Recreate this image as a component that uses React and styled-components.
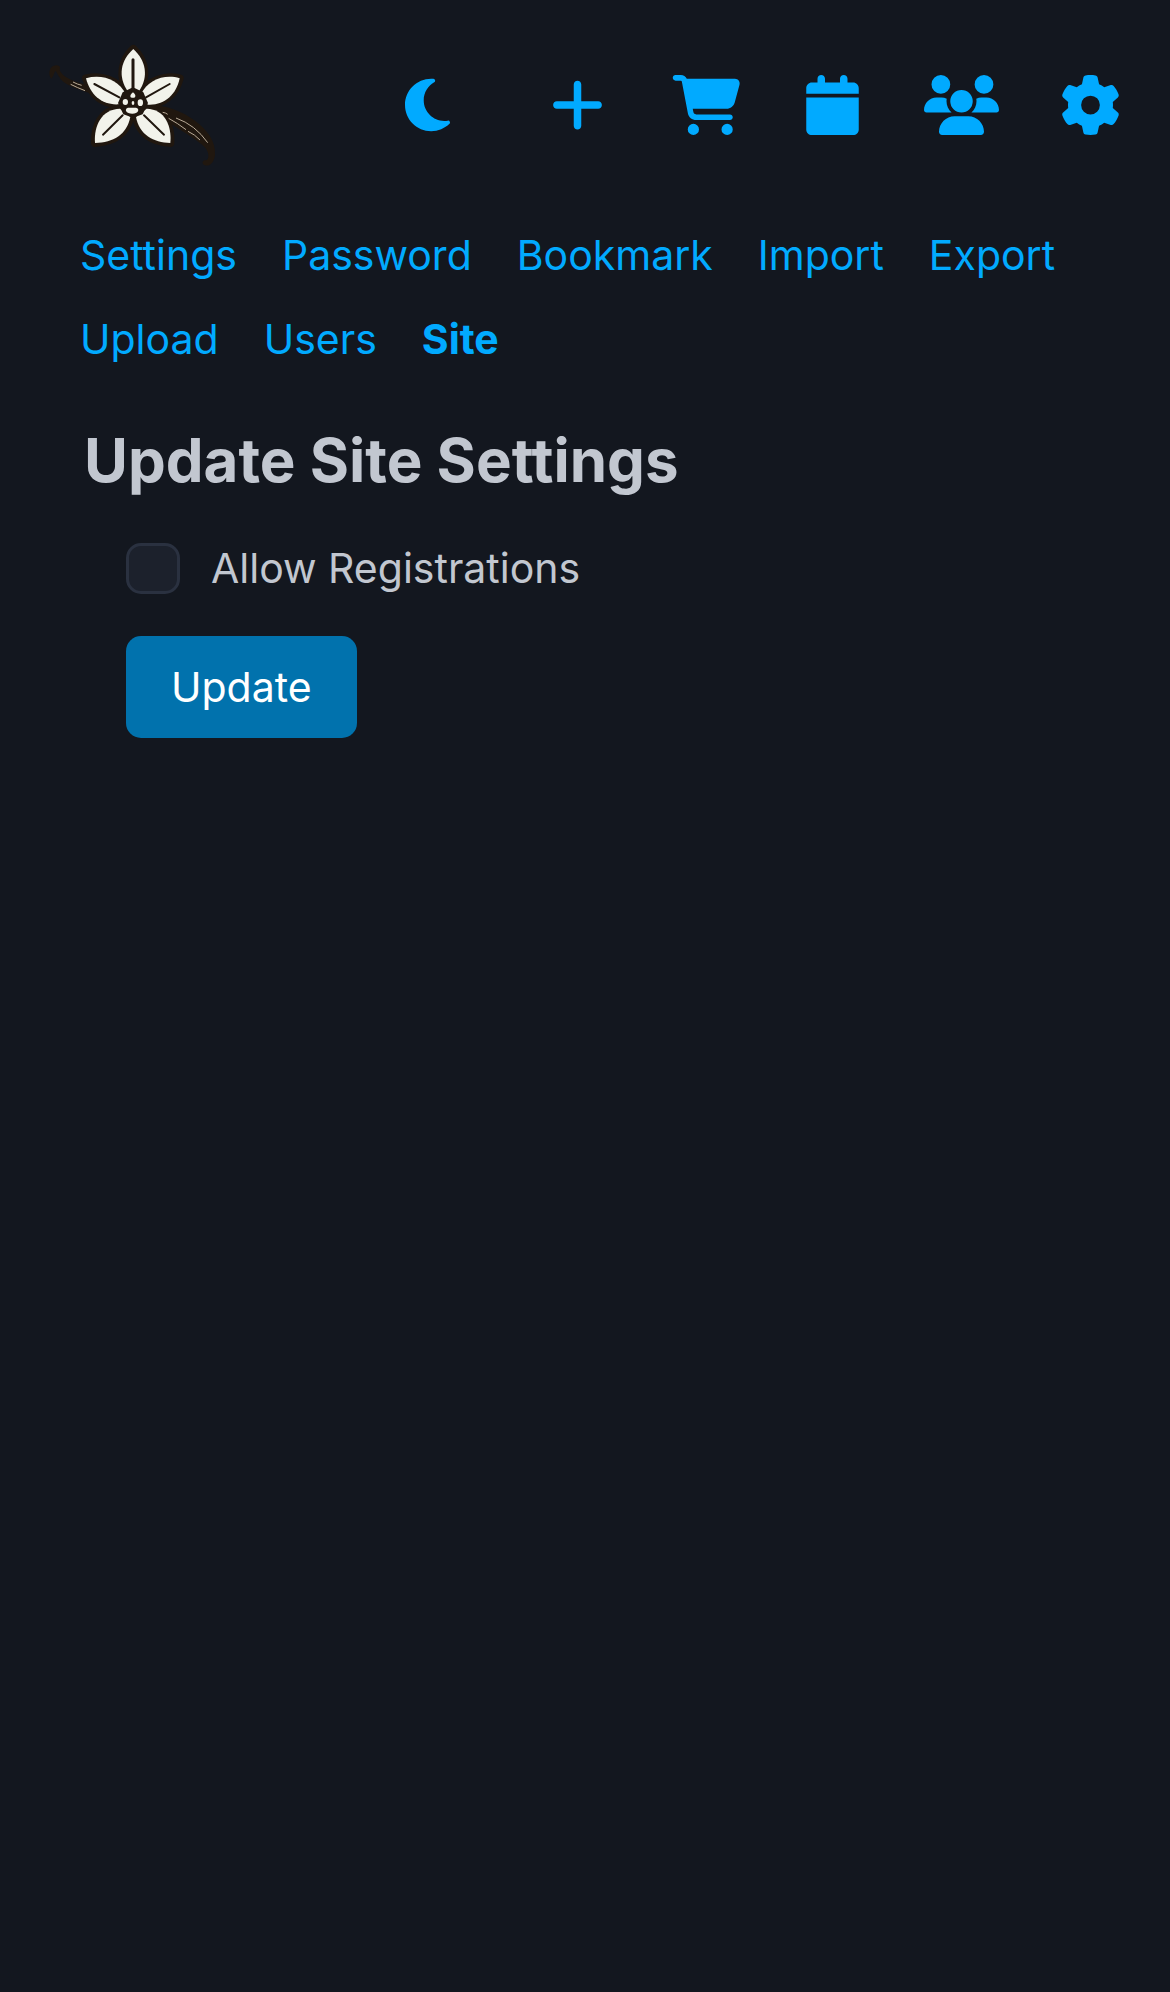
import React from "react";
import styled, { createGlobalStyle } from "styled-components";
import { FaMoon, FaPlus, FaCartShopping, FaCalendar, FaUsers, FaGear } from "react-icons/fa6";

const GlobalStyle = createGlobalStyle`
  *, *::before, *::after { box-sizing: border-box; }
  body {
    margin: 0;
    background: #13171f;
    color: #c2c7d0;
    font-family: Inter, "Liberation Sans", sans-serif;
    font-size: 41px;
    line-height: 60px;
  }
`;

const Header = styled.header`
  display: flex;
  align-items: center;
  justify-content: space-between;
  padding: 35px 42px 35px 40px;
`;

const HomeLink = styled.a`
  display: flex;
`;

const Logo = styled.svg`
  width: 190px;
  height: 140px;
`;

const IconNav = styled.nav`
  display: flex;
  gap: 51px;
`;

const IconGroup = styled.div`
  display: flex;
  gap: 54px;
`;

const iconBox = `
  display: flex;
  color: #01aaff;

  svg {
    width: 75px;
    height: 60px;
  }
`;

const IconLink = styled.a`
  ${iconBox}
`;

const ThemeButton = styled.button`
  ${iconBox}
  margin: 0 21px 0 0;
  padding: 0;
  border: 0;
  background: none;
  cursor: pointer;
`;

const TabNav = styled.nav`
  display: flex;
  flex-wrap: wrap;
  gap: 24px 45px;
  padding: 15px 80px 0;
`;

const TabLink = styled.a`
  color: #01aaff;
  font-weight: ${(p) => (p.$active ? 700 : 400)};
  text-decoration: none;
`;

const Main = styled.main`
  padding: 55px 84px;
`;

const Title = styled.h1`
  margin: 0 0 42px;
  font-size: 60px;
  font-weight: 700;
  line-height: 72px;
`;

const Form = styled.form`
  display: flex;
  flex-direction: column;
  align-items: flex-start;
  gap: 38px;
  padding: 0 42px;
`;

const CheckLabel = styled.label`
  display: flex;
  align-items: center;
  gap: 31px;
  cursor: pointer;
`;

const Checkbox = styled.input`
  appearance: none;
  width: 54px;
  height: 51px;
  margin: 0;
  border: 3px solid #2a3140;
  border-radius: 15px;
  background: #1c212c;

  &:checked {
    border-color: #0172ad;
    background: #0172ad;
  }
`;

const SubmitButton = styled.button`
  padding: 21px 45px;
  border: 0;
  border-radius: 15px;
  background: #0172ad;
  color: #fff;
  font: inherit;
  cursor: pointer;
`;

const tabs = ["Settings", "Password", "Bookmark", "Import", "Export", "Upload", "Users", "Site"];

function VanillaLogo() {
  return (
    <Logo viewBox="0 0 570 420" aria-hidden="true">
      <g fill="#20170f">
        <path d="M34 131C24 121 27 99 39 93C50 88 61 92 60 98C57 108 65 117 79 127C100 140 121 143 140 152L180 185L150 175C122 164 92 157 72 142C59 132 53 116 47 108C42 110 42 124 34 131Z" />
        <path d="M330 208C380 213 426 228 466 258C502 285 528 320 525 360C522 385 506 398 491 389C484 383 489 374 498 376C508 372 508 354 496 338C468 310 421 288 382 258C360 240 340 226 325 222Z" />
      </g>
      <g fill="none" stroke="#20170f" strokeWidth="24" strokeLinejoin="round">
        <path d="M280 42C245 75 235 125 264 170H296C325 125 315 75 280 42Z" />
        <path d="M138 130C184 120 234 134 258 180L236 208C187 207 154 178 138 130Z" />
        <path d="M419 130C376 120 326 134 302 180L323 209C370 208 406 178 419 130Z" />
        <path d="M165 324C163 275 184 225 240 221L271 246C258 298 220 320 165 324Z" />
        <path d="M391 324C394 275 375 225 320 221L288 246C300 298 340 320 391 324Z" />
      </g>
      <g fill="#f2f3eb">
        <path d="M280 42C242 75 232 125 264 170H296C328 125 317 75 280 42Z" />
        <path d="M138 130C184 117 236 132 258 180L236 208C185 211 151 180 138 130Z" />
        <path d="M419 130C376 117 324 132 302 180L323 209C372 212 409 180 419 130Z" />
        <path d="M165 324C161 274 184 222 240 221L271 246C260 300 220 322 165 324Z" />
        <path d="M391 324C396 274 375 222 320 221L288 246C298 300 340 322 391 324Z" />
      </g>
      <path d="M248 172L279 157L310 172L324 204L308 238L279 248L250 238L234 204Z" fill="#20170f" />
      <g fill="none" stroke="#20170f" strokeLinecap="round" strokeWidth="6">
        <path d="M279 74V165" strokeWidth="9" />
        <path d="M163 147L238 187M389 147L318 187M189 299L248 241M372 299L312 241" />
      </g>
      <g fill="#f2f3eb">
        <path d="M279 172C285 177 288 182 285 187Q279 190 272 187C269 182 273 177 279 172Z" />
        <ellipse cx="256" cy="201" rx="8" ry="9" />
        <ellipse cx="301" cy="203" rx="8" ry="10" />
        <ellipse cx="279" cy="204" rx="4" ry="6" />
        <path d="M264 218H288Q297 220 294 229Q290 236 277 236Q263 236 258 228Q256 220 264 218Z" />
      </g>
      <g fill="none" stroke="#b9ab98" strokeWidth="3">
        <path d="M99 141Q112 148 125 151M92 148Q112 158 135 167M368 232Q377 233 383 238M386 250Q412 264 438 284M408 249Q466 270 503 323M444 289Q464 298 480 315" />
      </g>
    </Logo>
  );
}

export default function App() {
  return (
    <>
      <GlobalStyle />
      <Header>
        <HomeLink href="#" aria-label="Home"><VanillaLogo /></HomeLink>
        <IconNav aria-label="Main">
          <IconGroup>
            <ThemeButton type="button" aria-label="Toggle theme"><FaMoon /></ThemeButton>
            <IconLink href="#add" aria-label="Add"><FaPlus /></IconLink>
            <IconLink href="#shopping" aria-label="Shopping"><FaCartShopping /></IconLink>
          </IconGroup>
          <IconGroup>
            <IconLink href="#calendar" aria-label="Calendar"><FaCalendar /></IconLink>
            <IconLink href="#people" aria-label="People"><FaUsers /></IconLink>
            <IconLink href="#settings" aria-label="Preferences"><FaGear /></IconLink>
          </IconGroup>
        </IconNav>
      </Header>
      <TabNav aria-label="Settings sections">
        {tabs.map((tab) => (
          <TabLink
            key={tab}
            href={`#${tab.toLowerCase()}`}
            $active={tab === "Site"}
            aria-current={tab === "Site" ? "page" : undefined}
          >
            {tab}
          </TabLink>
        ))}
      </TabNav>
      <Main>
        <Title>Update Site Settings</Title>
        <Form onSubmit={(event) => event.preventDefault()}>
          <CheckLabel htmlFor="allow-registrations">
            <Checkbox id="allow-registrations" type="checkbox" />
            Allow Registrations
          </CheckLabel>
          <SubmitButton type="submit">Update</SubmitButton>
        </Form>
      </Main>
    </>
  );
}
